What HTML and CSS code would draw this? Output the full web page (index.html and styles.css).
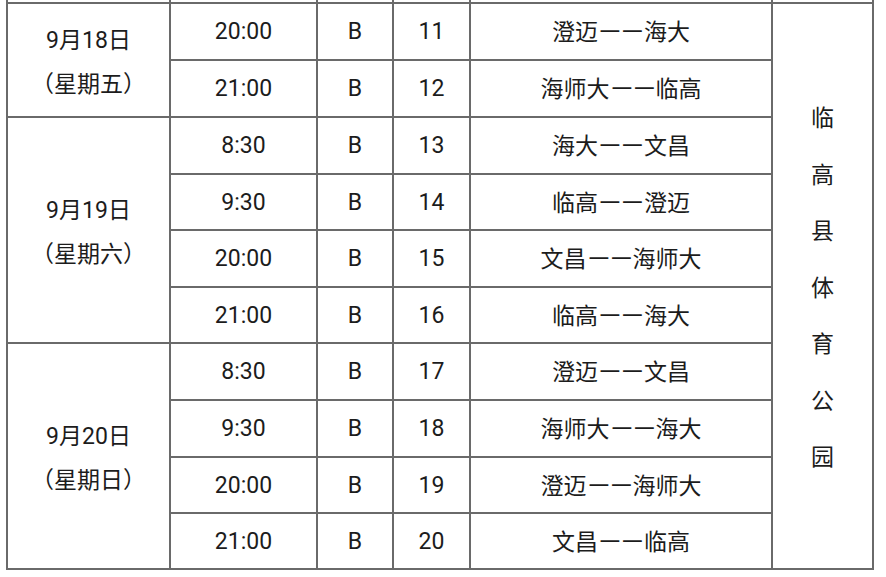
FILE: index.html
```html
<!DOCTYPE html>
<html lang="zh">
<head>
<meta charset="utf-8">
<title>赛程表</title>
<link rel="stylesheet" href="styles.css">
</head>
<body>
<div class="sheet">
  <div class="stub"></div><div class="stub"></div><div class="stub"></div><div class="stub"></div><div class="stub"></div><div class="stub"></div>

  <div class="cell date g1"><span>9月18日</span><span>（星期五）</span></div>
  <div class="cell">20:00</div><div class="cell">B</div><div class="cell">11</div><div class="cell team">澄迈<span class="dash">——</span>海大</div>
  <div class="cell venue"><span>临</span><span>高</span><span>县</span><span>体</span><span>育</span><span>公</span><span>园</span></div>
  <div class="cell">21:00</div><div class="cell">B</div><div class="cell">12</div><div class="cell team">海师大<span class="dash">——</span>临高</div>

  <div class="cell date g2"><span>9月19日</span><span>（星期六）</span></div>
  <div class="cell">8:30</div><div class="cell">B</div><div class="cell">13</div><div class="cell team">海大<span class="dash">——</span>文昌</div>
  <div class="cell">9:30</div><div class="cell">B</div><div class="cell">14</div><div class="cell team">临高<span class="dash">——</span>澄迈</div>
  <div class="cell">20:00</div><div class="cell">B</div><div class="cell">15</div><div class="cell team">文昌<span class="dash">——</span>海师大</div>
  <div class="cell">21:00</div><div class="cell">B</div><div class="cell">16</div><div class="cell team">临高<span class="dash">——</span>海大</div>

  <div class="cell date g3"><span>9月20日</span><span>（星期日）</span></div>
  <div class="cell">8:30</div><div class="cell">B</div><div class="cell">17</div><div class="cell team">澄迈<span class="dash">——</span>文昌</div>
  <div class="cell">9:30</div><div class="cell">B</div><div class="cell">18</div><div class="cell team">海师大<span class="dash">——</span>海大</div>
  <div class="cell">20:00</div><div class="cell">B</div><div class="cell">19</div><div class="cell team">澄迈<span class="dash">——</span>海师大</div>
  <div class="cell">21:00</div><div class="cell">B</div><div class="cell">20</div><div class="cell team">文昌<span class="dash">——</span>临高</div>
</div>
</body>
</html>
```
FILE: styles.css
```css
html, body {
  margin: 0;
  padding: 0;
  background: #ffffff;
}
body {
  font-family: Roboto, "Noto Sans CJK SC", sans-serif;
  font-size: 23px;
  color: #1c1c1c;
}
.sheet {
  margin-left: 6px;
  width: 868px;
  box-sizing: border-box;
  display: grid;
  grid-template-columns: 161px 145px 74px 75px 300px 99px;
  grid-template-rows: 2px 55px 55px 55px 54px 55px 54px 55px 55px 54px 54px;
  gap: 2px;
  padding: 0 2px 2px 2px;
  background: #6a6a6a;
}
.stub {
  background: #ffffff;
}
.cell {
  background: #ffffff;
  display: flex;
  align-items: center;
  justify-content: center;
  white-space: nowrap;
  line-height: 1;
}
.team {
  padding-top: 2px;
}
.dash {
  display: inline-block;
  transform: scaleX(1.25);
  margin: 0 5px;
}
.date {
  grid-column: 1;
  flex-direction: column;
  line-height: 44px;
  padding-top: 6px;
}
.date span { display: block; }
.g1 { grid-row: 2 / span 2; }
.g2 { grid-row: 4 / span 4; }
.g3 { grid-row: 8 / span 4; }
.venue {
  grid-column: 6;
  grid-row: 2 / span 10;
  flex-direction: column;
  line-height: 56.6px;
  padding-top: 6px;
}
.venue span { display: block; }
```
